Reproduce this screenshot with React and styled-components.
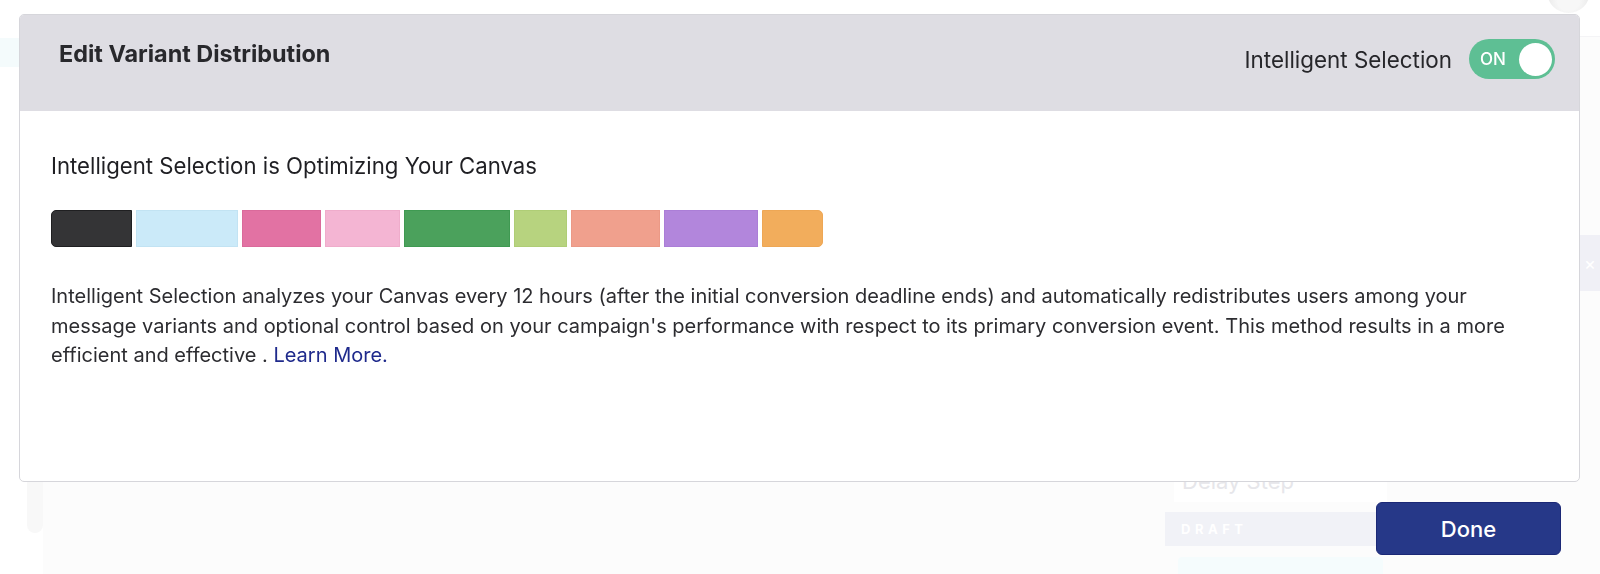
import React, { useState } from 'react';
import styled, { createGlobalStyle } from 'styled-components';

const GlobalStyle = createGlobalStyle`
  html, body {
    margin: 0;
    padding: 0;
    height: 100%;
    background: #ffffff;
    font-family: Inter, "Noto Sans", "Liberation Sans", sans-serif;
    -webkit-font-smoothing: antialiased;
  }
  * {
    box-sizing: border-box;
  }
`;

const variants = [
  { color: '#343436', edge: '#1f1f21', width: 81 },
  { color: '#cbeaf9', edge: '#c2e3f3', width: 102 },
  { color: '#e272a3', edge: '#da6a9b', width: 79 },
  { color: '#f4b5d3', edge: '#efaccb', width: 75 },
  { color: '#4ba15c', edge: '#3f9a52', width: 106 },
  { color: '#b7d37f', edge: '#afcd76', width: 53 },
  { color: '#f0a08d', edge: '#eb9986', width: 89 },
  { color: '#b286dc', edge: '#ab7ed7', width: 94 },
  { color: '#f2ad5c', edge: '#eea755', width: 61 },
];

const Styled = {
  Shell: styled.div`
    display: flex;
    height: 100vh;
    overflow: hidden;
  `,
  Rail: styled.aside`
    display: flex;
    flex-flow: column;
    width: 43px;
    background: #ffffff;
  `,
  RailItem: styled.div`
    height: 29px;
    margin-top: 38px;
    background: #f4fbfc;
  `,
  RailTab: styled.div`
    align-self: flex-end;
    width: 16px;
    height: 466px;
    border-radius: 0 0 8px 8px;
    background: #f8f8f8;
  `,
  Main: styled.main`
    display: flex;
    flex: 1;
    flex-flow: column;
    background: #fcfcfc;
  `,
  TopBar: styled.header`
    display: flex;
    justify-content: flex-end;
    height: 37px;
    padding-right: 10px;
    border-bottom: 1px solid #f4f4f6;
    background: #ffffff;
  `,
  Avatar: styled.div`
    width: 43px;
    height: 43px;
    margin-top: -30px;
    border-radius: 50%;
    background: radial-gradient(circle at 50% 70%, #f7f7f7 0 30%, #e9e9e9 60%, #f1f1f1 100%);
  `,
  Canvas: styled.div`
    position: relative;
    flex: 1;
  `,
  StepNode: styled.div`
    display: flex;
    position: absolute;
    top: 403px;
    left: 1122px;
    flex-flow: column;
    width: 235px;
  `,
  StepCard: styled.div`
    display: flex;
    justify-content: space-between;
    align-items: flex-end;
    height: 62px;
    margin: 0 13px 0 9px;
    padding: 0 14px 8px 8px;
    background: #ffffff;
    color: #e6e6ea;
    font-size: 22px;
    line-height: 26px;
  `,
  StepChevron: styled.span`
    margin-bottom: 14px;
    color: #ececef;
    font-size: 12px;
  `,
  StepStatus: styled.div`
    height: 34px;
    margin-top: 10px;
    padding-left: 16px;
    background: #f1f2f7;
    color: #ffffff;
    font-size: 13px;
    font-weight: 700;
    line-height: 34px;
    letter-spacing: 4.5px;
  `,
  StepNext: styled.div`
    height: 40px;
    margin: 11px 17px 0 13px;
    border-radius: 4px;
    background: #f5fcfd;
  `,
  PanelHandle: styled.button`
    position: absolute;
    top: 198px;
    right: 0;
    width: 20px;
    height: 56px;
    padding: 0;
    border: 0;
    background: #f0f0f6;
    color: #ffffff;
    font-size: 18px;
    font-family: inherit;
  `,
  Overlay: styled.div`
    display: flex;
    position: fixed;
    inset: 0;
    flex-flow: column;
    padding: 14px 20px 0 19px;
  `,
  Modal: styled.section`
    display: flex;
    flex-flow: column;
    height: 468px;
    border: 1px solid #d6d6db;
    border-radius: 5px;
    overflow: hidden;
    background: #ffffff;
  `,
  Header: styled.div`
    display: flex;
    justify-content: space-between;
    align-items: flex-start;
    height: 96px;
    padding: 24px 24px 0 39px;
    background: #dedde3;
  `,
  Title: styled.h2`
    margin: 0;
    color: #28282c;
    font-size: 23.4px;
    font-weight: 700;
    line-height: 30px;
  `,
  SwitchGroup: styled.label`
    display: flex;
    align-items: center;
    gap: 17px;
    height: 40px;
    color: #26262a;
    font-size: 22.4px;
    cursor: pointer;
  `,
  Switch: styled.button`
    display: flex;
    justify-content: space-between;
    align-items: center;
    width: 86px;
    height: 40px;
    padding: 0 3px 0 11px;
    border: 0;
    border-radius: 20px;
    background: ${({ $on }) => ($on ? '#5ebf94' : '#b9b9c0')};
    color: #ffffff;
    font-family: inherit;
    font-size: 17px;
    font-weight: 500;
    cursor: pointer;
  `,
  Knob: styled.span`
    width: 33px;
    height: 33px;
    border-radius: 50%;
    background: #ffffff;
  `,
  Body: styled.div`
    flex: 1;
    padding: 40px 36px 0 31px;
  `,
  Subtitle: styled.h3`
    margin: 0;
    color: #1f1f23;
    font-size: 22.2px;
    font-weight: 400;
    line-height: 30px;
  `,
  Distribution: styled.div`
    display: flex;
    gap: 4px;
    margin-top: 29px;
  `,
  Segment: styled.div`
    width: ${({ $width }) => $width}px;
    height: 37px;
    border: 1px solid ${({ $edge }) => $edge};
    background: ${({ $color }) => $color};

    &:first-child {
      border-radius: 5px 0 0 5px;
    }

    &:last-child {
      border-radius: 0 5px 5px 0;
    }
  `,
  Description: styled.p`
    margin: 35px 0 0;
    color: #2c2c30;
    font-size: 20px;
    line-height: 29.6px;
  `,
  Link: styled.a`
    color: #1f2a8c;
    text-decoration: none;
  `,
  Footer: styled.div`
    display: flex;
    justify-content: flex-end;
    margin-top: 20px;
    padding-right: 19px;
  `,
  DoneButton: styled.button`
    width: 185px;
    height: 53px;
    border: 1px solid #1b2876;
    border-radius: 6px;
    background: #263888;
    color: #ffffff;
    font-family: inherit;
    font-size: 22px;
    font-weight: 500;
    cursor: pointer;
  `,
};

function Background() {
  return (
    <Styled.Shell>
      <Styled.Rail>
        <Styled.RailItem />
        <Styled.RailTab />
      </Styled.Rail>
      <Styled.Main>
        <Styled.TopBar>
          <Styled.Avatar />
        </Styled.TopBar>
        <Styled.Canvas>
          <Styled.StepNode>
            <Styled.StepCard>
              Delay Step
              <Styled.StepChevron>⌄</Styled.StepChevron>
            </Styled.StepCard>
            <Styled.StepStatus>DRAFT</Styled.StepStatus>
            <Styled.StepNext />
          </Styled.StepNode>
          <Styled.PanelHandle>×</Styled.PanelHandle>
        </Styled.Canvas>
      </Styled.Main>
    </Styled.Shell>
  );
}

export default function App() {
  const [isIntelligent, setIsIntelligent] = useState(true);

  return (
    <>
      <GlobalStyle />
      <Background />
      <Styled.Overlay>
        <Styled.Modal>
          <Styled.Header>
            <Styled.Title>Edit Variant Distribution</Styled.Title>
            <Styled.SwitchGroup>
              Intelligent Selection
              <Styled.Switch
                $on={isIntelligent}
                onClick={() => setIsIntelligent(!isIntelligent)}
              >
                {isIntelligent ? 'ON' : 'OFF'}
                <Styled.Knob />
              </Styled.Switch>
            </Styled.SwitchGroup>
          </Styled.Header>
          <Styled.Body>
            <Styled.Subtitle>Intelligent Selection is Optimizing Your Canvas</Styled.Subtitle>
            <Styled.Distribution>
              {variants.map(variant => (
                <Styled.Segment
                  key={variant.color}
                  $color={variant.color}
                  $edge={variant.edge}
                  $width={variant.width}
                />
              ))}
            </Styled.Distribution>
            <Styled.Description>
              Intelligent Selection analyzes your Canvas every 12 hours (after the initial
              conversion deadline ends) and automatically redistributes users among your
              message variants and optional control based on your campaign&apos;s performance
              with respect to its primary conversion event. This method results in a more
              efficient and effective .
              {' '}
              <Styled.Link href="#learn-more">Learn More.</Styled.Link>
            </Styled.Description>
          </Styled.Body>
        </Styled.Modal>
        <Styled.Footer>
          <Styled.DoneButton>Done</Styled.DoneButton>
        </Styled.Footer>
      </Styled.Overlay>
    </>
  );
}
